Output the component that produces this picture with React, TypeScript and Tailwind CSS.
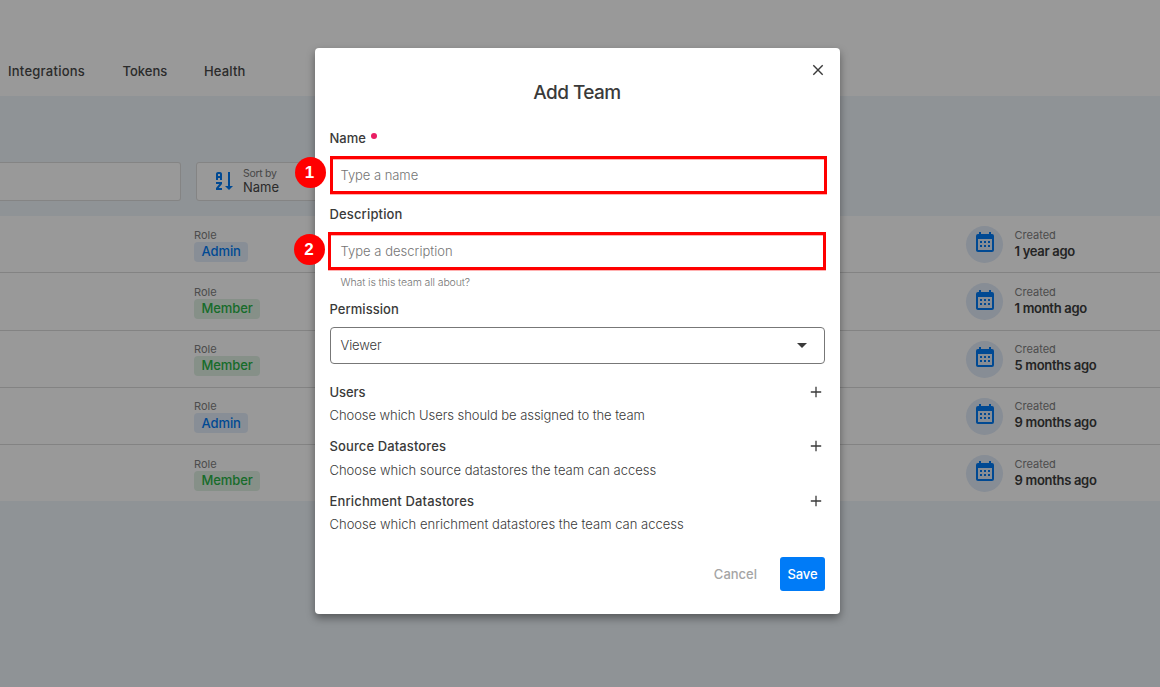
import React from "react";

const rows = [
  { role: "Admin", created: "1 year ago" },
  { role: "Member", created: "1 month ago" },
  { role: "Member", created: "5 months ago" },
  { role: "Admin", created: "9 months ago" },
  { role: "Member", created: "9 months ago" },
];

const sections = [
  {
    title: "Users",
    text: "Choose which Users should be assigned to the team",
    titleTracking: "tracking-[-0.05px]",
    textStyle: "tracking-[-0.06px] mt-[2px]",
  },
  {
    title: "Source Datastores",
    text: "Choose which source datastores the team can access",
    titleTracking: "tracking-[0.11px]",
    textStyle: "mt-[3px]",
  },
  {
    title: "Enrichment Datastores",
    text: "Choose which enrichment datastores the team can access",
    titleTracking: "tracking-[0.15px]",
    textStyle: "tracking-[0.01px] mt-[2px]",
  },
];

function Icon({ d, className }: { d: string; className: string }) {
  return (
    <svg viewBox="0 0 24 24" className={className} fill="currentColor">
      <path d={d} />
    </svg>
  );
}

const calendar =
  "M9,10V12H7V10H9M13,10V12H11V10H13M17,10V12H15V10H17M19,3A2,2 0 0,1 21,5V19A2,2 0 0,1 19,21H5C3.89,21 3,20.1 3,19V5A2,2 0 0,1 5,3H6V1H8V3H16V1H18V3H19M19,19V8H5V19H19M9,14V16H7V14H9M13,14V16H11V14H13M17,14V16H15V14H17Z";
const sortAz =
  "M19 17H22L18 21L14 17H17V3H19V17M11 13V15L7.67 19H11V21H5V19L8.33 15H5V13H11M9 3H7C5.9 3 5 3.9 5 5V11H7V9H9V11H11V5C11 3.9 10.11 3 9 3M9 7H7V5H9V7Z";

function Page() {
  return (
    <div className="flex h-full flex-col bg-[#eff5fa]">
      <nav className="flex h-24 shrink-0 gap-[37.5px] bg-white pt-[61px] pl-2 text-[13px] leading-5 font-medium text-[#484848]">
        <span className="w-[77px] tracking-[0.25px] whitespace-nowrap">Integrations</span>
        <span className="w-[44px] whitespace-nowrap">Tokens</span>
        <span className="tracking-[0.15px] whitespace-nowrap">Health</span>
      </nav>
      <div className="mt-[66px] flex h-[39px] shrink-0 gap-[15px]">
        <div className="w-[181px] rounded-r-[3px] border border-l-0 border-[#dcdcdc] bg-white" />
        <div className="flex w-[200px] rounded-[3px] border border-[#dcdcdc] bg-white pt-1.5 pl-[14px]">
          <Icon d={sortAz} className="size-6 text-[#007bf5]" />
          <div className="ml-[8px] -mt-[2px]">
            <div className="text-[10.5px] leading-[14px] tracking-[-0.3px] text-[#777]">Sort by</div>
            <div className="-mt-px text-[13px] leading-[14px] text-[#484848]">Name</div>
          </div>
        </div>
      </div>
      <div className="mt-[15px] bg-white">
        {rows.map((r, i) => (
          <div
            key={i}
            className={`flex pl-[194px] ${i < 4 ? "h-[57.25px] border-b border-[#dadada]" : "h-[56.4px]"}`}
          >
            <div className="w-[772px] pt-[11.7px]">
              <div className="text-[11px] leading-[14px] text-[#808080]">Role</div>
              <span
                className={`flex h-5 w-fit items-center rounded-[4px] px-[7.5px] text-[13px] font-medium tracking-[-0.1px] ${
                  r.role === "Admin" ? "bg-[#e3edfb] text-[#007bf5]" : "bg-[#dff0e3] text-[#28b446]"
                }`}
              >
                {r.role}
              </span>
            </div>
            <div className="mt-[10px] flex size-[37px] items-center justify-center rounded-full bg-[#e1ebf9]">
              <Icon d={calendar} className="mb-[2.5px] size-6 text-[#007bf5]" />
            </div>
            <div className="ml-[11.5px] pt-[11.7px]">
              <div className="text-[11px] leading-[14px] text-[#808080]">Created</div>
              <div className="text-[13px] leading-[19px] font-semibold tracking-[-0.3px] text-[#3c3c3c]">{r.created}</div>
            </div>
          </div>
        ))}
      </div>
    </div>
  );
}

function Label({ children, className = "" }: { children: React.ReactNode; className?: string }) {
  return (
    <div className={`-ml-[0.5px] flex h-5 items-center text-[13px] font-medium text-[#3a3a3a] ${className}`}>
      {children}
    </div>
  );
}

function Dialog() {
  return (
    <div className="relative h-[566px] w-[525px] rounded-[4px] bg-white px-[15px] text-[#3a3a3a] shadow-[0_4px_8px_rgba(0,0,0,0.4)]">
      <div className="flex h-[44px] items-center justify-end pr-[1px]">
        <svg viewBox="0 0 12 12" className="size-3" fill="none" stroke="currentColor" strokeWidth="1.4">
          <path d="M1.3 1.3 10.7 10.7M10.7 1.3 1.3 10.7" />
        </svg>
      </div>
      <h1 className="-mt-[13px] h-7 pr-[1px] text-center text-[19px] leading-7 font-medium tracking-[-0.55px]">
        Add Team
      </h1>
      <div className="mt-[22px]">
        <Label>
          Name
          <span className="mb-[7px] ml-[5px] size-[6px] rounded-full bg-[#e91e63]" />
        </Label>
        <div className="mt-[7px] flex h-[38px] w-[497px] items-center border-[3px] border-[#ff0000] pt-[2px] pl-[7.5px] text-[13px] font-light tracking-[-0.05px] text-[#757575] shadow-[0_1px_0_#ffb0b0,inset_0_1px_0_#ffb0b0]">
          Type a name
        </div>
      </div>
      <div className="mt-[11px]">
        <Label className="tracking-[0.15px]">Description</Label>
        <div className="mt-[7px] -ml-[2px] flex h-[38px] w-[497.5px] items-center border-[3px] border-[#ff0000] pt-[2px] pl-[9.5px] text-[13px] font-light tracking-[0.02px] text-[#757575] shadow-[0_1px_0_#ffb0b0,inset_0_1px_0_#ffb0b0]">
          Type a description
        </div>
        <div className="mt-[5px] ml-[10.5px] h-4 text-[10.5px] leading-4 font-light tracking-[-0.12px] text-[#757575]">
          What is this team all about?
        </div>
      </div>
      <div className="mt-[9px]">
        <Label className="tracking-[0.05px]">Permission</Label>
        <div className="mt-[7px] flex h-[37px] items-center justify-between rounded-[4px] border border-[#777] pr-[17px] pl-[9.5px] text-[13px] font-light tracking-[-0.1px]">
          Viewer
          <svg viewBox="0 0 10 5" className="h-[5px] w-[10px]" fill="currentColor">
            <path d="M0 0H10L5 5Z" />
          </svg>
        </div>
      </div>
      <div className="mt-[18.5px] flex flex-col gap-[10.5px]">
        {sections.map((s) => (
          <div key={s.title} className="h-[44px]">
            <div className="flex items-center justify-between pr-[3px]">
              <Label className={s.titleTracking}>{s.title}</Label>
              <svg viewBox="0 0 12 12" className="mb-[2px] size-3" fill="none" stroke="currentColor" strokeWidth="1.3">
                <path d="M6 .8V11.2M.8 6H11.2" />
              </svg>
            </div>
            <div className={`-ml-[0.5px] text-[13px] leading-5 font-light whitespace-nowrap ${s.textStyle}`}>
              {s.text}
            </div>
          </div>
        ))}
      </div>
      <div className="mt-[21.5px] flex items-center justify-end gap-[23px] text-[13px] font-medium">
        <span className="pt-px text-[#a5a5a5]">Cancel</span>
        <button className="h-[34px] w-[45px] rounded-[3px] bg-[#007bf7] pt-px tracking-[-0.1px] text-white">Save</button>
      </div>
      <span className="absolute top-[109px] -left-[20.5px] flex size-[31px] items-center justify-center rounded-full bg-[#ff0000] pr-px font-['Liberation_Sans',sans-serif] text-[17px] font-bold text-white">
        1
      </span>
      <span className="absolute top-[186px] -left-[21.5px] flex size-[31px] items-center justify-center rounded-full bg-[#ff0000] font-['Liberation_Sans',sans-serif] text-[17px] font-bold text-white">
        2
      </span>
    </div>
  );
}

export default function App() {
  return (
    <div className="relative h-[687px] w-[1160px] overflow-hidden font-['Inter',sans-serif]">
      <Page />
      <div className="absolute inset-0 bg-black/40 pt-12 pl-[315px]">
        <Dialog />
      </div>
    </div>
  );
}
